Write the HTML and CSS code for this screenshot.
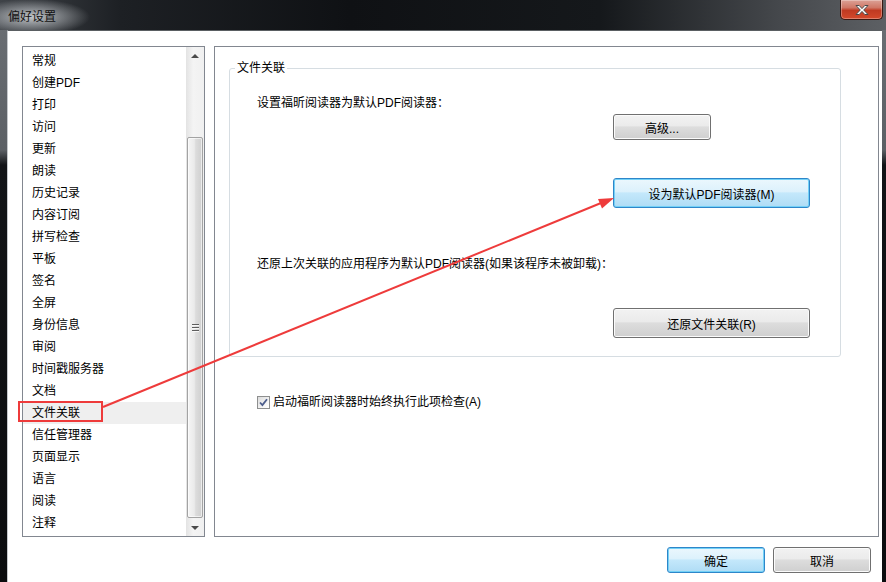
FILE: index.html
```html
<!DOCTYPE html>
<html lang="zh-CN">
<head>
    <meta charset="UTF-8">
    <title>偏好设置</title>
    <link rel="stylesheet" href="styles.css">
</head>
<body>
    <div class="window">
        <div class="titlebar">
            <span class="title">偏好设置</span>
            <button class="close-btn" aria-label="关闭">
                <svg width="16" height="12" viewBox="0 0 16 12">
                    <path d="M2 1.5h3.2L8 4.6l2.8-3.1H14L9.7 6 14 10.5h-3.2L8 7.4l-2.8 3.1H2L6.3 6z" fill="#fff" stroke="#4a4a4a" stroke-width="1" stroke-linejoin="round"/>
                </svg>
            </button>
        </div>

        <div class="client">
            <div class="main">
                <div class="listbox">
                    <ul class="nav-list">
                        <li>常规</li>
                        <li>创建PDF</li>
                        <li>打印</li>
                        <li>访问</li>
                        <li>更新</li>
                        <li>朗读</li>
                        <li>历史记录</li>
                        <li>内容订阅</li>
                        <li>拼写检查</li>
                        <li>平板</li>
                        <li>签名</li>
                        <li>全屏</li>
                        <li>身份信息</li>
                        <li>审阅</li>
                        <li>时间戳服务器</li>
                        <li>文档</li>
                        <li class="selected">文件关联</li>
                        <li>信任管理器</li>
                        <li>页面显示</li>
                        <li>语言</li>
                        <li>阅读</li>
                        <li>注释</li>
                    </ul>
                    <div class="scrollbar">
                        <div class="sb-arrow"><span class="tri-up"></span></div>
                        <div class="sb-track">
                            <div class="sb-thumb"><span class="grip"></span></div>
                        </div>
                        <div class="sb-arrow"><span class="tri-down"></span></div>
                    </div>
                </div>

                <div class="panel">
                    <fieldset class="group">
                        <legend>文件关联</legend>
                        <div class="group-body">
                            <p class="hint">设置福昕阅读器为默认PDF阅读器：</p>
                            <button class="btn btn-small btn-advanced">高级...</button>
                            <button class="btn btn-wide btn-default btn-set">设为默认PDF阅读器(M)</button>
                            <p class="hint hint-restore">还原上次关联的应用程序为默认PDF阅读器(如果该程序未被卸载)：</p>
                            <button class="btn btn-wide btn-restore">还原文件关联(R)</button>
                        </div>
                    </fieldset>

                    <label class="check-row">
                        <span class="checkbox">
                            <svg width="11" height="11" viewBox="0 0 11 11">
                                <path d="M2 5.5l2.4 2.6L9 2.2" fill="none" stroke="#4c5d8c" stroke-width="1.8"/>
                            </svg>
                        </span>
                        启动福昕阅读器时始终执行此项检查(A)
                    </label>
                </div>
            </div>

            <div class="footer">
                <button class="btn btn-small btn-default">确定</button>
                <button class="btn btn-small">取消</button>
            </div>
        </div>

        <!-- red callout drawn over the dialog -->
        <svg class="annotation" width="886" height="582" viewBox="0 0 886 582">
            <rect x="19" y="402" width="83" height="19" fill="none" stroke="#ee3b3b" stroke-width="2"/>
            <line x1="103" y1="407" x2="601" y2="203" stroke="#ee3b3b" stroke-width="2"/>
            <polygon points="614,198 602,208.5 598,199" fill="#ee3b3b"/>
        </svg>
    </div>
</body>
</html>
```

FILE: styles.css
```css
body {
    margin: 0;
    width: 886px;
    height: 582px;
    overflow: hidden;
    font-family: "Liberation Sans", "Noto Sans CJK SC", sans-serif;
    font-size: 12px;
    color: #000;
    background: #111316;
}

.window {
    position: relative;
    height: 582px;
    display: flex;
    flex-direction: column;
    background: linear-gradient(to bottom, #6c7075 0, #5c6065 150px, #121417 165px, #0b0c0e 100%);
}

/* title bar */
.titlebar {
    height: 30px;
    flex-shrink: 0;
    display: flex;
    align-items: flex-start;
    background:
        radial-gradient(ellipse 58px 18px at 32px 17px, rgba(200, 204, 208, 0.95), rgba(200, 204, 208, 0) 100%),
        linear-gradient(to right, #3f4348 0, #1d2024 120px, #0f1114 350px, #15181b 600px, #45484c 780px, #5d6064 886px);
}

.title {
    padding: 10px 0 0 8px;
    line-height: 14px;
    color: #121212;
}

.close-btn {
    margin: 0 3px 0 auto;
    width: 43px;
    height: 20px;
    padding: 0;
    display: flex;
    align-items: center;
    justify-content: center;
    border: 1px solid #3a1812;
    border-top: none;
    border-radius: 0 0 5px 5px;
    background: linear-gradient(to bottom, #dca196 0, #cf7766 40%, #c03a22 55%, #d4492b 100%);
    box-shadow: inset 0 0 0 1px rgba(255, 255, 255, 0.3);
}

/* client area */
.client {
    flex: 1;
    margin: 0 4px 0 7px;
    padding: 15px 0 0 14px;
    background: #fff;
    border-left: 1px solid #c4c7cb;
    border-top: 1px solid #5a5e62;
}

.main {
    display: flex;
    gap: 9px;
    height: 491px;
}

/* category list */
.listbox {
    box-sizing: border-box;
    width: 183px;
    display: flex;
    border: 1px solid #828790;
}

.nav-list {
    flex: 1;
    margin: 0;
    padding: 3px 0 0;
    list-style: none;
}

.nav-list li {
    height: 22px;
    line-height: 22px;
    padding-left: 9px;
    white-space: nowrap;
}

.nav-list li.selected {
    background: #efefef;
}

.scrollbar {
    width: 18px;
    display: flex;
    flex-direction: column;
    background: linear-gradient(to right, #e3e3e3, #f4f4f4 40%, #f0f0f0);
}

.sb-arrow {
    height: 17px;
    display: flex;
    align-items: center;
    justify-content: center;
}

.tri-up,
.tri-down {
    width: 0;
    height: 0;
    border-left: 4px solid transparent;
    border-right: 4px solid transparent;
}

.tri-up {
    border-bottom: 4px solid #4a4a4a;
}

.tri-down {
    border-top: 4px solid #4a4a4a;
}

.sb-track {
    flex: 1;
    display: flex;
    flex-direction: column;
    padding: 73px 1px 1px;
}

.sb-thumb {
    flex: 1;
    display: flex;
    align-items: center;
    justify-content: center;
    border: 1px solid #a3a3a3;
    border-radius: 2px;
    background: linear-gradient(to right, #f5f5f5 0, #eaeaea 45%, #dcdcdc 55%, #cfcfcf 100%);
    box-shadow: inset 0 0 0 1px rgba(255, 255, 255, 0.6);
}

.grip {
    width: 7px;
    height: 8px;
    background: repeating-linear-gradient(to bottom, #5e5e5e 0, #5e5e5e 1px, #f8f8f8 1px, #f8f8f8 2px, transparent 2px, transparent 3px);
}

/* settings panel */
.panel {
    box-sizing: border-box;
    width: 665px;
    border: 1px solid #828790;
}

.group {
    box-sizing: border-box;
    width: 612px;
    margin: 14px 0 0 14px;
    padding: 0 0 18px 5px;
    border: 1px solid #d6dde2;
    border-radius: 3px;
}

.group legend {
    padding: 0 2px;
    line-height: 14px;
}

.group-body {
    padding-left: 22px;
}

.hint {
    margin: 20px 0 0;
    line-height: 16px;
    white-space: nowrap;
}

.hint-restore {
    margin-top: 48px;
}

.btn {
    display: block;
    box-sizing: border-box;
    padding: 0;
    font: inherit;
    color: #000;
    border: 1px solid #707070;
    border-radius: 3px;
    background: linear-gradient(to bottom, #f2f2f2 0, #ebebeb 45%, #dddddd 50%, #cfcfcf 100%);
    box-shadow: inset 0 0 0 1px #fbfbfb;
}

.btn-small {
    width: 98px;
    height: 26px;
}

.btn-wide {
    width: 197px;
    height: 30px;
}

.btn-default {
    border-color: #2e86c9;
    background: linear-gradient(to bottom, #ebf7fd 0, #dcf1fc 45%, #c4e8fb 50%, #afdcf5 100%);
    box-shadow: inset 0 0 0 1px #73d1f7;
}

.btn-advanced,
.btn-set,
.btn-restore {
    margin-left: 356px;
}

.btn-advanced {
    margin-top: 3px;
}

.btn-set {
    margin-top: 38px;
}

.btn-restore {
    margin-top: 36px;
}

.check-row {
    display: flex;
    align-items: center;
    margin-top: 37px;
    padding-left: 42px;
    line-height: 16px;
}

.checkbox {
    box-sizing: border-box;
    width: 13px;
    height: 13px;
    margin-right: 3px;
    display: flex;
    align-items: center;
    justify-content: center;
    border: 1px solid #8e8f8f;
    background: linear-gradient(135deg, #dcdcdc, #f7f7f7 70%, #fff);
}

/* dialog buttons */
.footer {
    display: flex;
    justify-content: flex-end;
    gap: 8px;
    padding: 10px 11px 0 0;
}

.annotation {
    position: absolute;
    top: 0;
    left: 0;
    pointer-events: none;
}
```
